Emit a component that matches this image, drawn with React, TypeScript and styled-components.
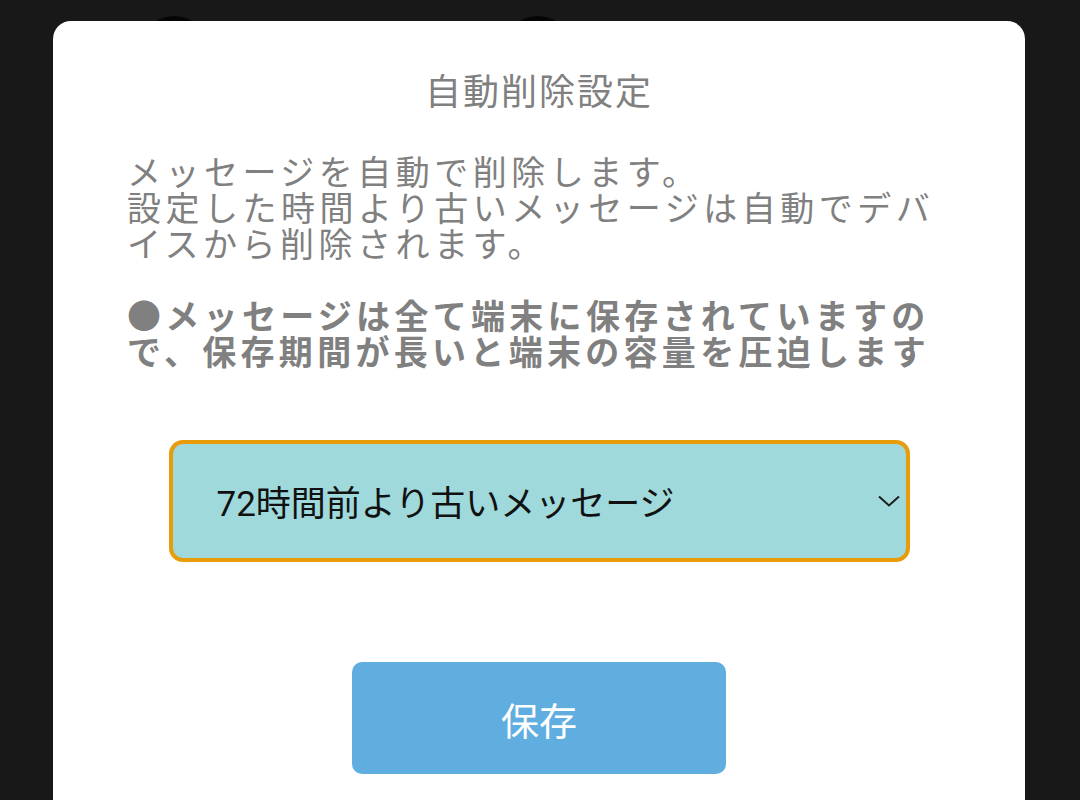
import { useState } from 'react';
import styled, { createGlobalStyle } from 'styled-components';

const GlobalStyle = createGlobalStyle`
  html, body {
    margin: 0;
    padding: 0;
    background-color: #181818;
  }

  * {
    box-sizing: border-box;
  }
`;

const OPTIONS = [
  '24時間前より古いメッセージ',
  '48時間前より古いメッセージ',
  '72時間前より古いメッセージ',
  '1週間前より古いメッセージ',
];

export default function App() {
  const [selected, setSelected] = useState<number>(2);

  const onClickSelect = () => {
    setSelected((selected + 1) % OPTIONS.length);
  };

  return (
    <Page>
      <GlobalStyle />
      <Backdrop>
        <Avatar />
        <Avatar />
      </Backdrop>
      <Modal>
        <Title>自動削除設定</Title>
        <Description>
          メッセージを自動で削除します。
          <br />
          設定した時間より古いメッセージは自動でデバイスから削除されます。
        </Description>
        <Warning>●メッセージは全て端末に保存されていますので、保存期間が長いと端末の容量を圧迫します</Warning>
        <SelectBox type='button' onClick={onClickSelect}>
          <span>{OPTIONS[selected]}</span>
          <svg width='22' height='12' viewBox='0 0 22 12' fill='none'>
            <path d='M1 1.5 L11 10.5 L21 1.5' stroke='#1d1d1d' strokeWidth='2' />
          </svg>
        </SelectBox>
        <SaveButton type='button'>保存</SaveButton>
      </Modal>
    </Page>
  );
}

const Page = styled.div`
  position: relative;
  width: 1080px;
  height: 800px;
  overflow: hidden;
  background-color: #181818;
  font-family: 'Noto Sans CJK JP', 'Noto Sans', sans-serif;
`;

const Backdrop = styled.div`
  display: flex;
  gap: 296px;
  padding: 16px 0 0 140px;
`;

const Avatar = styled.div`
  width: 68px;
  height: 68px;
  border-radius: 50%;
  background-color: #050505;
`;

const Modal = styled.div`
  position: absolute;
  top: 21px;
  left: 53px;
  width: 972px;
  height: 840px;

  display: flex;
  flex-direction: column;
  align-items: center;

  padding: 44px 74px 0;

  background-color: #ffffff;
  border-radius: 18px;
`;

const Title = styled.div`
  font-size: 36px;
  line-height: 48px;
  letter-spacing: 2px;
  color: #808080;
  text-align: center;
`;

const Description = styled.p`
  width: 100%;
  margin: 40px 0 0;

  font-size: 34px;
  line-height: 36px;
  letter-spacing: 4.5px;
  color: #808080;
`;

const Warning = styled(Description)`
  margin-top: 36px;
  font-weight: 700;
  letter-spacing: 4.3px;
`;

const SelectBox = styled.button`
  width: 741px;
  height: 122px;
  margin-top: 71px;

  display: flex;
  align-items: center;
  justify-content: space-between;

  padding: 0 6px 0 44px;

  font-family: Roboto, 'Noto Sans CJK JP', sans-serif;
  font-size: 35px;
  color: #111111;

  background-color: #a0d9db;
  border: 4px solid #e89c0a;
  border-radius: 14px;

  cursor: pointer;

  span {
    padding-bottom: 2px;
  }
`;

const SaveButton = styled.button`
  width: 374px;
  height: 112px;
  margin-top: 100px;

  font-family: 'Noto Sans CJK JP', sans-serif;
  font-size: 38px;
  color: #ffffff;

  background-color: #60aee0;
  border: none;
  border-radius: 10px;

  cursor: pointer;
`;
